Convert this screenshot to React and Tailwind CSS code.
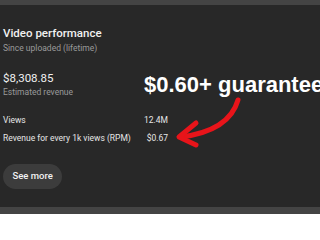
import React from "react";

const rows = [
  { label: "Views", value: "12.4M" },
  { label: "Revenue for every 1k views (RPM)", value: "$0.67" },
];

const App = () => {
  return (
    <div
      className="relative w-[320px] h-[214px] overflow-hidden bg-[#282828] flex flex-col"
      style={{ fontFamily: "Roboto, 'Liberation Sans', sans-serif" }}
    >
      {/* Top strip */}
      <div className="h-[5px] bg-[#444444] shrink-0" />

      {/* Card */}
      <div className="flex-1 pl-[3px] flex flex-col items-start">
        <h2 className="mt-[21px] text-[11.5px] leading-[14px] font-medium text-[#f1f1f1]">
          Video performance
        </h2>
        <p className="mt-[3px] text-[8.5px] leading-[10px] text-[#9a9a9a]">
          Since uploaded (lifetime)
        </p>

        <p className="mt-[17.5px] text-[11.5px] leading-[14px] text-[#f1f1f1]">
          $8,308.85
        </p>
        <p className="mt-[2px] text-[8.5px] leading-[10px] text-[#9a9a9a]">
          Estimated revenue
        </p>

        <div className="mt-[18.5px] w-[165px] flex flex-col gap-[7.5px]">
          {rows.map((row) => (
            <div
              key={row.label}
              className="flex justify-between whitespace-nowrap text-[8.5px] leading-[10px] text-[#e6e6e6]"
            >
              <span>{row.label}</span>
              <span>{row.value}</span>
            </div>
          ))}
        </div>

        <button className="mt-[21.5px] h-[25px] px-[9.5px] rounded-full bg-[#3c3c3c] text-[9.5px] font-medium text-[#f1f1f1]">
          See more
        </button>
      </div>

      {/* Bottom strip */}
      <div className="h-[7px] bg-[#444444] shrink-0" />

      {/* Annotation */}
      <div
        className="absolute left-[144px] top-[74px] text-[22px] leading-[22px] font-bold text-white whitespace-nowrap"
        style={{ fontFamily: "'Liberation Sans', Arial, sans-serif" }}
      >
        $0.60+ guaranteed
      </div>
      <svg
        className="absolute left-[170px] top-[95px]"
        width="80"
        height="60"
        viewBox="0 0 80 60"
        fill="none"
      >
        <path
          d="M68 5 C 62 26, 42 38, 11 42"
          stroke="#e8141a"
          strokeWidth="5"
          strokeLinecap="round"
        />
        <path
          d="M26 28 L9 42 L26 50"
          stroke="#e8141a"
          strokeWidth="5"
          strokeLinecap="round"
          strokeLinejoin="round"
        />
      </svg>
    </div>
  );
};

export default App;
